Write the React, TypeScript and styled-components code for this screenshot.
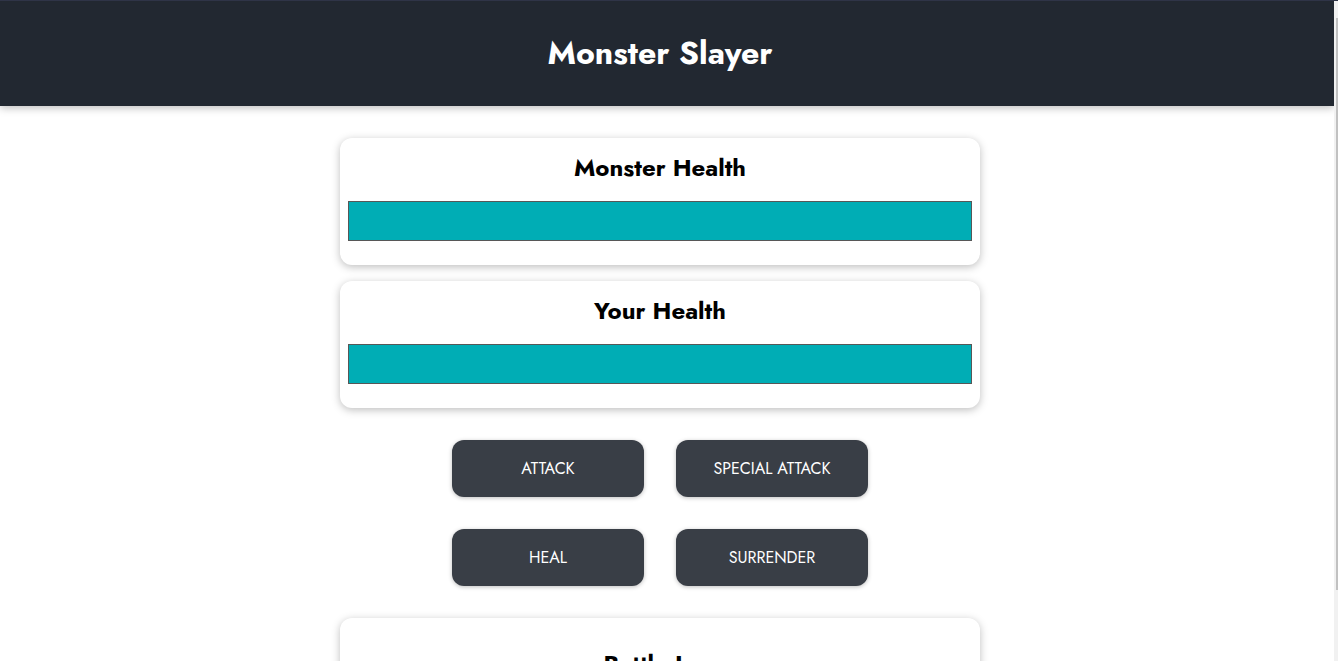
import React from "react";
import styled, { createGlobalStyle } from "styled-components";

const GlobalStyle = createGlobalStyle`
  * { box-sizing: border-box; }
  body {
    margin: 0;
    background: #ffffff;
    color: #000000;
    font-family: Jost, Lato, sans-serif;
  }
`;

const Page = styled.div`
  display: grid;
  grid-template-columns: 1fr 4px;
  height: 100vh;
  overflow: hidden;
  border-top: 1px solid #2f3447;
`;

const Content = styled.div`
  min-width: 0;
  overflow: hidden;
`;

const Header = styled.header`
  padding: 32px 14px 32px 0;
  background: #222831;
  box-shadow: 0 2px 8px rgba(0, 0, 0, 0.26);
`;

const Title = styled.h1`
  margin: 0;
  color: #ffffff;
  font-size: 32px;
  font-weight: 700;
  line-height: 41px;
  text-align: center;
`;

const Game = styled.main`
  display: flex;
  flex-direction: column;
  align-items: center;
  gap: 32px;
  padding: 32px 14px 32px 0;
`;

const HealthBars = styled.div`
  display: flex;
  flex-direction: column;
  gap: 16px;
  width: 100%;
  max-width: 640px;
`;

const Card = styled.section<{ $roomy?: boolean }>`
  width: 100%;
  max-width: 640px;
  padding: ${({ $roomy }) => ($roomy ? "28px 8px 24px" : "12px 8px 24px")};
  border-radius: 12px;
  background: #ffffff;
  box-shadow: 0 2px 8px rgba(0, 0, 0, 0.26);
`;

const CardTitle = styled.h2`
  margin: 0 0 16px;
  font-size: 24px;
  font-weight: 700;
  line-height: 35px;
  text-align: center;
`;

const Track = styled.div`
  height: 40px;
  border: 1px solid #575757;
  background: #ffffff;
`;

const Fill = styled.div`
  height: 100%;
  background: #00adb5;
`;

const Controls = styled.div`
  display: grid;
  grid-template-columns: repeat(2, 192px);
  gap: 32px;
`;

const ActionButton = styled.button`
  padding: 16px;
  border: 0;
  border-radius: 12px;
  background: #393e46;
  color: #ffffff;
  font-family: inherit;
  font-size: 16px;
  line-height: 25px;
  box-shadow: 0 1px 4px rgba(0, 0, 0, 0.26);
  cursor: pointer;
`;

const Scrollbar = styled.div`
  padding: 17px 0 0 2px;
  background: #f1f1f1;
`;

const Thumb = styled.div`
  height: 89%;
  background: #c1c1c1;
`;

const combatants = [
  { name: "Monster Health", health: 100 },
  { name: "Your Health", health: 100 },
];

const actions = ["ATTACK", "SPECIAL ATTACK", "HEAL", "SURRENDER"];

export default function App() {
  return (
    <>
      <GlobalStyle />
      <Page>
        <Content>
          <Header>
            <Title>Monster Slayer</Title>
          </Header>
          <Game>
            <HealthBars>
              {combatants.map(({ name, health }) => (
                <Card key={name}>
                  <CardTitle>{name}</CardTitle>
                  <Track
                    role="progressbar"
                    aria-label={name}
                    aria-valuenow={health}
                    aria-valuemin={0}
                    aria-valuemax={100}
                  >
                    <Fill style={{ width: `${health}%` }} />
                  </Track>
                </Card>
              ))}
            </HealthBars>
            <Controls>
              {actions.map((action) => (
                <ActionButton key={action} type="button">
                  {action}
                </ActionButton>
              ))}
            </Controls>
            <Card $roomy>
              <CardTitle>Battle Log</CardTitle>
            </Card>
          </Game>
        </Content>
        <Scrollbar aria-hidden="true">
          <Thumb />
        </Scrollbar>
      </Page>
    </>
  );
}
